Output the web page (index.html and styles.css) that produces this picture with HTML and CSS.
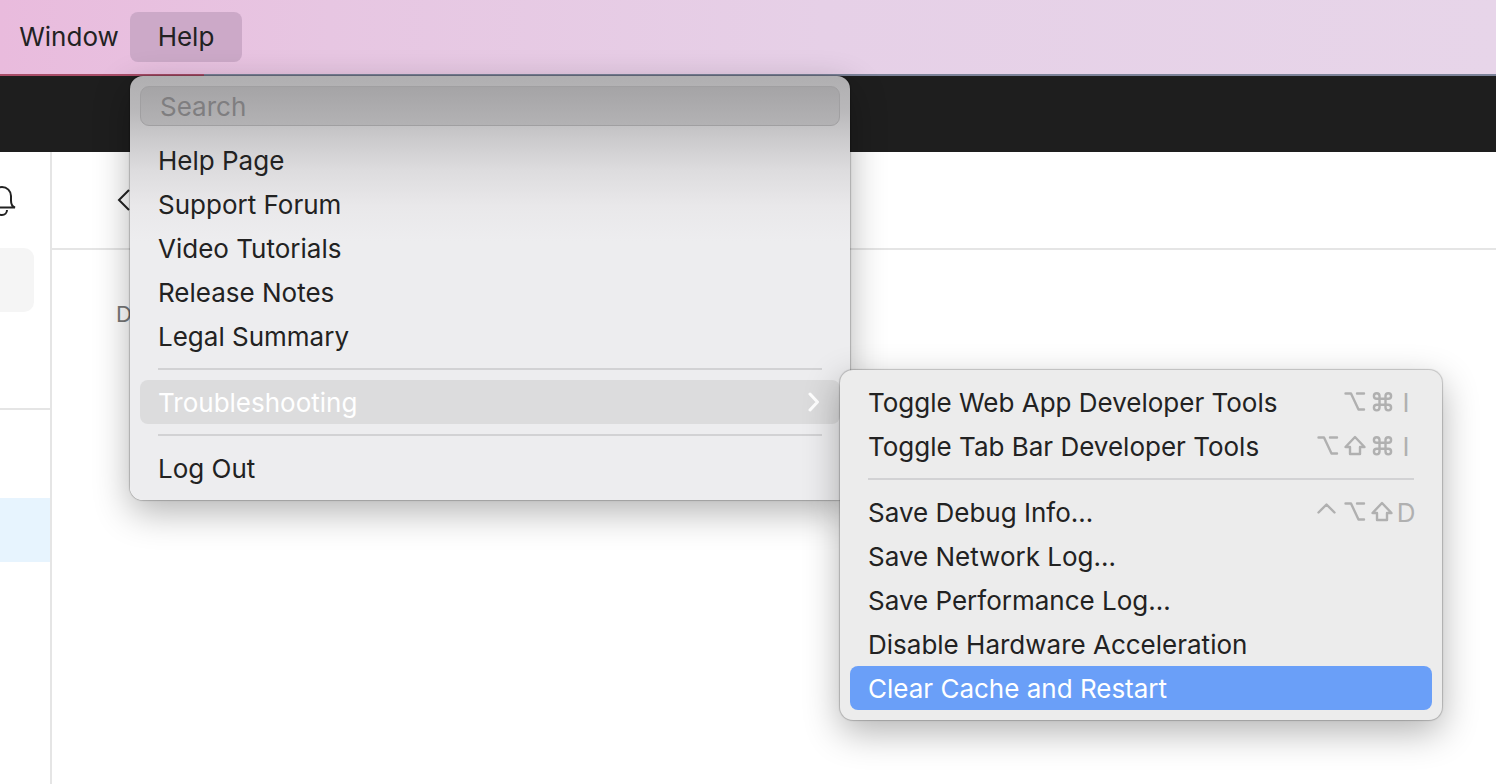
FILE: index.html
```
<!DOCTYPE html>
<html lang="en">
<head>
  <meta charset="UTF-8">
  <title>Help menu</title>
  <link rel="stylesheet" href="styles.css">
</head>
<body>
  <!-- shared key symbols -->
  <svg class="symbols" aria-hidden="true">
    <symbol id="key-option" viewBox="0 0 22 22"><path d="M1.500 2.500h5.500l7.500 16h5.500M13 2.500h7"/></symbol>
    <symbol id="key-command" viewBox="0 0 22 22"><path d="M8.500 5a2.800 2.800 0 1 0-2.800 2.800h11.600a2.800 2.800 0 1 0-2.800-2.800v11.600a2.800 2.800 0 1 0 2.800-2.800H5.700a2.800 2.800 0 1 0 2.800 2.800z"/></symbol>
    <symbol id="key-shift" viewBox="0 0 22 22"><path d="M11 2L1.500 12H6v7h10v-7h4.500z"/></symbol>
    <symbol id="key-control" viewBox="0 0 22 22"><path d="M1.500 11.500L9.500 3.500l8 8"/></symbol>
  </svg>

  <header class="menubar">
    <button class="menubar-item window">Window</button>
    <div class="menubar-group">
      <button class="menubar-item active">Help</button>
      <div class="menu help-menu">
        <input class="search" type="text" placeholder="Search" aria-label="Search">
        <button class="item"><span>Help Page</span></button>
        <button class="item"><span>Support Forum</span></button>
        <button class="item"><span>Video Tutorials</span></button>
        <button class="item"><span>Release Notes</span></button>
        <button class="item"><span>Legal Summary</span></button>
        <hr>
        <div class="submenu-group">
          <button class="item open">
            <span>Troubleshooting</span>
            <svg class="chevron" viewBox="0 0 14 22"><path d="M2 3l7.500 8L2 19"/></svg>
          </button>
          <div class="menu submenu">
            <button class="item">
              <span>Toggle Web App Developer Tools</span>
              <span class="keys"><svg><use href="#key-option"/></svg><svg><use href="#key-command"/></svg><kbd>I</kbd></span>
            </button>
            <button class="item">
              <span>Toggle Tab Bar Developer Tools</span>
              <span class="keys"><svg><use href="#key-option"/></svg><svg><use href="#key-shift"/></svg><svg><use href="#key-command"/></svg><kbd>I</kbd></span>
            </button>
            <hr>
            <button class="item">
              <span>Save Debug Info…</span>
              <span class="keys"><svg><use href="#key-control"/></svg><svg><use href="#key-option"/></svg><svg><use href="#key-shift"/></svg><kbd>D</kbd></span>
            </button>
            <button class="item"><span>Save Network Log…</span></button>
            <button class="item"><span>Save Performance Log…</span></button>
            <button class="item"><span>Disable Hardware Acceleration</span></button>
            <button class="item selected"><span>Clear Cache and Restart</span></button>
          </div>
        </div>
        <hr>
        <button class="item"><span>Log Out</span></button>
      </div>
    </div>
  </header>
  <div class="desktop-edge"></div>

  <div class="tabbar"></div>
  <div class="app">
    <aside class="sidebar">
      <button class="bell" aria-label="Notifications">
        <svg viewBox="0 0 32 32"><path d="M3 23.500h26c-3-1-4-3-4-7V12a9 9 0 0 0-18 0v4.500c0 4-1 6-4 7zM11 26a5 5 0 0 0 10 0"/></svg>
      </button>
      <div class="side-search"></div>
      <div class="side-line"></div>
      <div class="side-selected"></div>
    </aside>
    <main class="content">
      <div class="toolbar">
        <button class="back" aria-label="Back">
          <svg viewBox="0 0 14 24"><path d="M12 2L2 12l10 10"/></svg>
        </button>
      </div>
      <p class="label">D</p>
    </main>
  </div>
</body>
</html>
```

FILE: styles.css
```
* {
  margin: 0;
  padding: 0;
  box-sizing: border-box;
}
body {
  font-family: Inter, "Liberation Sans", sans-serif;
  font-size: 26px;
  color: #222;
  background-color: #fff;
  min-height: 100vh;
  display: flex;
  flex-direction: column;
  overflow: hidden;
}
button {
  font: inherit;
  color: inherit;
  background: none;
  border: none;
}
svg {
  fill: none;
  stroke: currentColor;
  flex-shrink: 0;
}
.symbols {
  position: absolute;
  width: 0;
  height: 0;
}

/* menu bar */
.menubar {
  display: flex;
  align-items: center;
  height: 74px;
  background: linear-gradient(90deg, #e9bbdd 0%, #e7c6e2 22%, #e6d0e7 55%, #e7d5e9 100%);
}
.menubar-item {
  height: 50px;
  padding-bottom: 2px;
  border-radius: 8px;
}
.menubar-item.window {
  width: 130px;
  padding-left: 8px;
}
.menubar-group {
  position: relative;
}
.menubar-item.active {
  width: 112px;
  background-color: #cca9c8;
}
.desktop-edge {
  height: 2px;
  background: linear-gradient(90deg, #a94d68 0, #a94d68 204px, #7c8399 204px);
}

/* menus */
.menu {
  position: absolute;
  padding: 10px;
  border-radius: 13px;
}
.help-menu {
  top: 64px;
  left: 0;
  width: 720px;
  z-index: 2;
  background: linear-gradient(180deg, #b0afb1 0, #b9b8ba 34px, #cbcacc 62px, #dddcde 94px, #e9e8ea 130px, #ededef 165px);
  box-shadow: 0 0 1px 1px rgba(0,0,0,0.2), 0 12px 36px rgba(0,0,0,0.3);
}
.submenu-group {
  position: relative;
}
.submenu {
  top: -10px;
  left: 700px;
  width: 602px;
  background-color: #ececec;
  box-shadow: 0 0 1px 1px rgba(0,0,0,0.2), 0 12px 36px rgba(0,0,0,0.3);
}
.search {
  display: block;
  width: 100%;
  height: 40px;
  margin-bottom: 12px;
  padding: 0 19px;
  font: inherit;
  border: 1px solid #a09fa1;
  border-radius: 9px;
  background: linear-gradient(180deg, #a5a4a6, #b3b2b4);
}
.search::placeholder {
  color: #7f7e80;
  opacity: 1;
}
.item {
  display: flex;
  align-items: center;
  justify-content: space-between;
  width: 100%;
  height: 44px;
  padding: 0 18px;
  border-radius: 8px;
  text-align: left;
  white-space: nowrap;
}
.item.open {
  color: #fff;
  background-color: #dcdcdd;
}
.item.selected {
  color: #fff;
  background-color: #6a9ff8;
}
.menu hr {
  height: 2px;
  margin: 10px 18px;
  border: none;
  background-color: #d2d2d4;
}
.chevron {
  width: 14px;
  height: 22px;
  stroke-width: 3;
  stroke-linecap: round;
  stroke-linejoin: round;
}
.keys {
  display: flex;
  align-items: center;
  gap: 5px;
  color: #b0b0b0;
}
.keys svg {
  width: 22px;
  height: 22px;
  stroke-width: 2.4;
  stroke-linecap: round;
  stroke-linejoin: round;
}
.keys kbd {
  display: flex;
  justify-content: center;
  width: 16px;
  font: inherit;
}

/* app window behind the menus */
.tabbar {
  height: 76px;
  background-color: #1e1e1e;
}
.app {
  display: flex;
  flex: 1;
}
.sidebar {
  width: 52px;
  border-right: 2px solid #e5e5e5;
  overflow: hidden;
}
.bell {
  display: block;
  height: 96px;
  margin-left: -14px;
}
.bell svg {
  display: block;
  width: 32px;
  height: 32px;
  stroke-width: 2;
}
.side-search {
  width: 34px;
  height: 64px;
  border-radius: 0 10px 10px 0;
  background-color: #f5f5f5;
}
.side-line {
  height: 2px;
  margin: 96px 0 88px;
  background-color: #e5e5e5;
}
.side-selected {
  height: 64px;
  background-color: #e7f4fe;
}
.content {
  flex: 1;
}
.toolbar {
  display: flex;
  align-items: center;
  height: 98px;
  padding-left: 65px;
  border-bottom: 2px solid #e5e5e5;
}
.back svg {
  display: block;
  width: 14px;
  height: 24px;
  stroke-width: 2;
}
.label {
  padding: 50px 64px;
  font-size: 22px;
  line-height: 28px;
  color: #777;
}
```
